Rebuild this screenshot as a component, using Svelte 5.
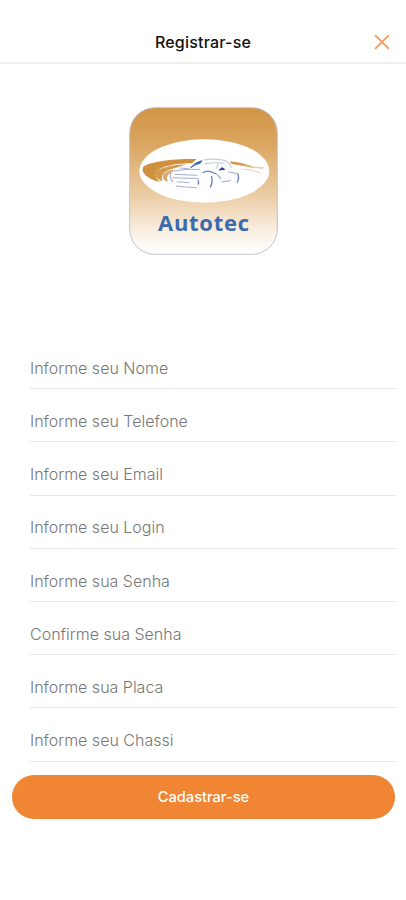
<script>
    let fields = $state([
        { name: 'nome', label: 'Informe seu Nome', type: 'text', value: '' },
        { name: 'telefone', label: 'Informe seu Telefone', type: 'tel', value: '' },
        { name: 'email', label: 'Informe seu Email', type: 'email', value: '' },
        { name: 'login', label: 'Informe seu Login', type: 'text', value: '' },
        { name: 'senha', label: 'Informe sua Senha', type: 'password', value: '' },
        { name: 'confirma', label: 'Confirme sua Senha', type: 'password', value: '' },
        { name: 'placa', label: 'Informe sua Placa', type: 'text', value: '' },
        { name: 'chassi', label: 'Informe seu Chassi', type: 'text', value: '' }
    ]);
</script>

<main>
    <header>
        <h1>Registrar-se</h1>
        <button class="close-button" type="button" aria-label="Fechar">
            <svg width="16" height="16" viewBox="0 0 16 16" fill="none">
                <path d="M1.6 1.6L14.4 14.4M14.4 1.6L1.6 14.4" stroke="#f4975a" stroke-width="1.7" stroke-linecap="round" />
            </svg>
        </button>
    </header>

    <svg class="logo" width="149" height="148" viewBox="27 21 447 444" fill="none" role="img" aria-label="Autotec">
        <defs>
            <linearGradient id="gold" x1="0" y1="0" x2="0" y2="1">
                <stop offset="0" stop-color="#d29444" />
                <stop offset="0.25" stop-color="#daa661" />
                <stop offset="0.6" stop-color="#ebcda5" />
                <stop offset="0.85" stop-color="#faf0e4" />
                <stop offset="1" stop-color="#ffffff" />
            </linearGradient>
        </defs>
        <rect x="29" y="23" width="443" height="440" rx="76" fill="url(#gold)" stroke="#c3c3d2" stroke-width="3" />
        <ellipse cx="253" cy="213" rx="195" ry="95" fill="#fff" />
        <!-- road swooshes -->
        <path d="M230 177C160 176 92 184 70 200C60 216 84 238 121 246C94 224 106 206 146 197C172 191 200 190 216 190Z" fill="#cf9140" />
        <path d="M200 193C142 196 104 208 106 224C108 234 118 240 128 243C120 228 128 213 164 205Z" fill="#d49a4c" />
        <path d="M160 209C136 213 122 222 130 236C134 242 140 245 144 245C138 232 142 222 158 216Z" fill="#dcaa6c" />
        <path d="M330 184C362 187 386 194 404 204C380 200 352 194 334 192Z" fill="#d49a4c" />
        <path d="M372 194Q404 204 432 203M364 207Q394 208 420 218M388 203Q412 200 430 207" stroke="#ecc79f" stroke-width="2.5" />
        <!-- car -->
        <path d="M212 203Q226 186 246 182L240 190Q226 192 212 203Z" fill="#3a68b0" stroke="#3a68b0" stroke-width="3" />
        <path d="M250 180Q286 174 318 182M254 191Q286 186 314 190M294 190L290 206M318 184Q330 190 334 204" stroke="#c3cbe1" stroke-width="3.5" />
        <path d="M298 210L306 203L314 208Z" fill="#233f91" stroke="#233f91" stroke-width="3" />
        <path d="M160 213Q196 206 240 208M164 223L232 226M158 233L236 236M170 246Q184 245 208 248M168 258Q200 262 230 263M180 204L206 206" stroke="#a3b0d0" stroke-width="3" />
        <path d="M248 219Q262 206 288 222M234 240Q238 248 234 254M274 228Q280 244 271 262M352 219Q360 232 351 248" stroke="#6d85bb" stroke-width="4" />
        <path d="M152 218Q148 232 158 246M288 221Q298 226 302 237M304 246L332 242M324 216Q340 216 348 222" stroke="#a3b0d0" stroke-width="3.5" />
        <text x="114" y="393" textLength="273">Autotec</text>
    </svg>

    <form onsubmit={(e) => e.preventDefault()}>
        <div class="fields">
            {#each fields as field (field.name)}
                <input name={field.name} type={field.type} placeholder={field.label} aria-label={field.label} bind:value={field.value} />
            {/each}
        </div>
        <button class="submit-button">Cadastrar-se</button>
    </form>
</main>

<style>
    :global(body) {
        margin: 0;
        background: #fff;
    }

    main {
        display: flex;
        flex-direction: column;
        min-height: 100vh;
        font-family: Inter, "Liberation Sans", sans-serif;
    }

    header {
        display: grid;
        grid-template-columns: 48px 1fr 48px;
        align-items: center;
        box-sizing: border-box;
        height: 64px;
        padding-top: 22px;
        border-bottom: 2px solid #efefef;
    }

    h1 {
        grid-column: 2;
        margin: 0;
        font-size: 16px;
        font-weight: 500;
        line-height: 20px;
        letter-spacing: 0.2px;
        text-align: center;
        color: #111;
    }

    button {
        border: none;
        font-family: inherit;
    }

    .close-button {
        display: flex;
        justify-content: center;
        padding: 0;
        background: transparent;
    }

    .logo {
        display: block;
        margin: 43px auto 0;
    }

    .logo text {
        font-family: "Open Sans", "Noto Sans", sans-serif;
        font-size: 66px;
        font-weight: 700;
        fill: #3c6aae;
    }

    form {
        display: flex;
        flex-direction: column;
        margin-top: 81px;
    }

    .fields {
        display: flex;
        flex-direction: column;
        padding: 0 10px 0 30px;
    }

    input {
        box-sizing: border-box;
        width: 100%;
        height: 53.2px;
        padding: 11.5px 0 0;
        border: none;
        border-bottom: 1.5px solid #e6e6e6;
        border-radius: 0;
        outline: none;
        background: transparent;
        font-family: inherit;
        font-size: 16px;
        font-weight: 300;
        color: #333;
    }

    input::placeholder {
        color: #777;
        opacity: 1;
    }

    .submit-button {
        height: 44px;
        margin: 13px 11px 0 12px;
        padding: 1px 0 0;
        border-radius: 22px;
        background: #f08534;
        font-size: 14.6px;
        font-weight: 500;
        color: #fff;
    }
</style>
